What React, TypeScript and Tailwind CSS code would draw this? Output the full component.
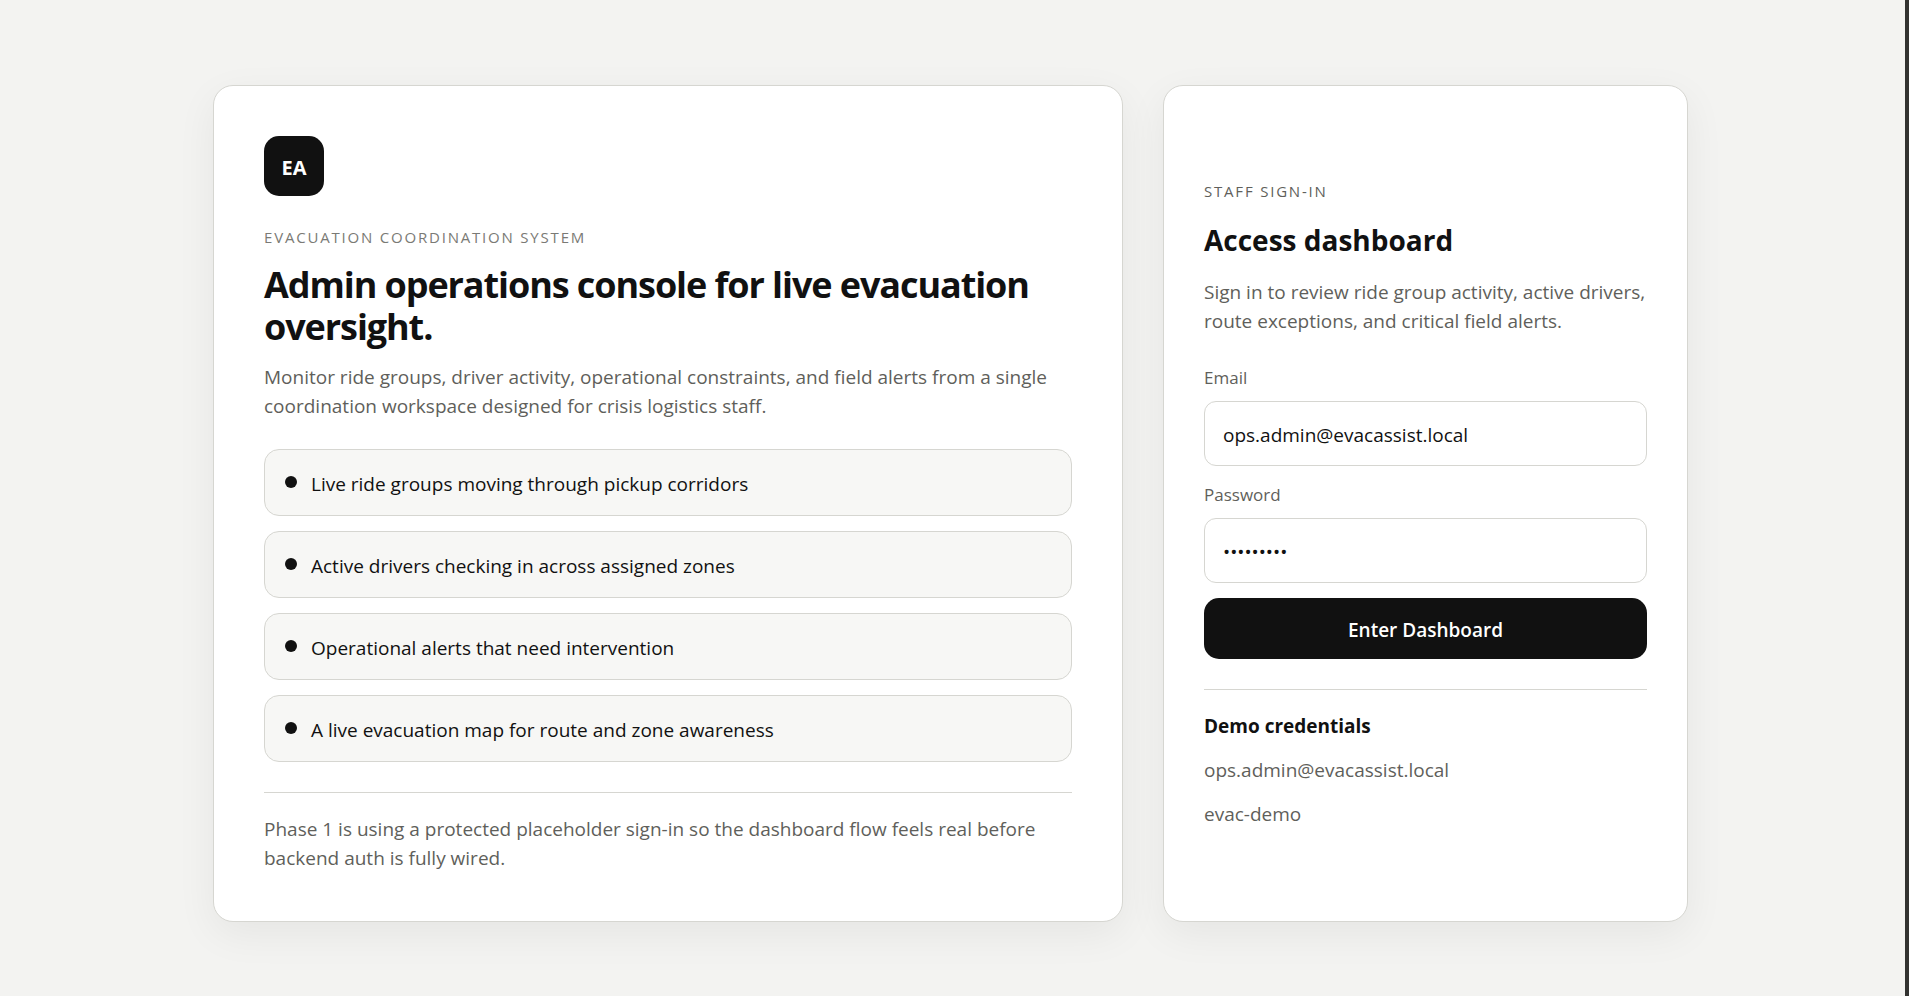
import { useState } from 'react';

const highlights = [
  'Live ride groups moving through pickup corridors',
  'Active drivers checking in across assigned zones',
  'Operational alerts that need intervention',
  'A live evacuation map for route and zone awareness',
];

const cardClass =
  'bg-white border border-[#d6d6d1] rounded-[20px] shadow-[0_12px_40px_rgba(17,17,17,0.06)]';
const inputClass =
  'w-full h-[65px] px-[18px] pt-0.5 rounded-xl border border-[#d6d6d1] bg-white text-[#111111] outline-none focus:border-[#111111]';

const IntroPanel = () => {
  return (
    <section className={`${cardClass} p-[50px]`}>
      <div className="size-[60px] pt-1 rounded-[15px] bg-[#111111] text-white text-xl font-bold flex items-center justify-center">
        EA
      </div>
      <p className="mt-[30px] text-[15px] leading-[22px] tracking-[0.12em] uppercase text-[#7a7a75]">
        Evacuation coordination system
      </p>
      <h1 className="mt-4 text-[36px] leading-[42px] font-bold tracking-[-0.03em]">
        Admin operations console for live evacuation oversight.
      </h1>
      <p className="mt-[15px] text-[#5f5f5b]">
        Monitor ride groups, driver activity, operational constraints, and field alerts from a single
        coordination workspace designed for crisis logistics staff.
      </p>
      <ul className="mt-7 grid gap-[15px]">
        {highlights.map((item) => (
          <li
            key={item}
            className="flex items-start gap-[14px] px-5 pt-5 pb-4 rounded-[15px] border border-[#d6d6d1] bg-[#f7f7f5]"
          >
            <span className="mt-1.5 size-3 shrink-0 rounded-full bg-[#111111]" />
            <span>{item}</span>
          </li>
        ))}
      </ul>
      <p className="mt-[30px] pt-[22px] -mb-0.5 border-t border-[#d6d6d1] text-[#5f5f5b]">
        Phase 1 is using a protected placeholder sign-in so the dashboard flow feels real before
        backend auth is fully wired.
      </p>
    </section>
  );
};

const SignInPanel = () => {
  const [email, setEmail] = useState('ops.admin@evacassist.local');
  const [password, setPassword] = useState('evac-demo');

  return (
    <section className={`${cardClass} p-10 flex flex-col justify-center`}>
      <p className="text-[15px] leading-[22px] tracking-[0.12em] uppercase text-[#5f5f5b]">
        Staff sign-in
      </p>
      <h2 className="mt-4 text-[28px] leading-[44px] font-bold">Access dashboard</h2>
      <p className="mt-4 text-[#5f5f5b]">
        Sign in to review ride group activity, active drivers, route exceptions, and critical field
        alerts.
      </p>
      <form className="mt-7 grid gap-[15px]" onSubmit={(e) => e.preventDefault()}>
        <div className="grid gap-[10px]">
          <label htmlFor="email" className="text-[17px] leading-[27px] text-[#5f5f5b]">
            Email
          </label>
          <input
            id="email"
            type="email"
            className={inputClass}
            value={email}
            onChange={(e) => setEmail(e.target.value)}
          />
        </div>
        <div className="grid gap-[10px]">
          <label htmlFor="password" className="text-[17px] leading-[27px] text-[#5f5f5b]">
            Password
          </label>
          <input
            id="password"
            type="password"
            className={inputClass}
            value={password}
            onChange={(e) => setPassword(e.target.value)}
          />
        </div>
        <button
          type="submit"
          className="h-[61px] pt-1 rounded-[15px] bg-[#111111] text-white font-semibold cursor-pointer"
        >
          Enter Dashboard
        </button>
      </form>
      <div className="mt-[30px] pt-[22px] -mb-0.5 border-t border-[#d6d6d1] grid gap-[15px] text-[#5f5f5b]">
        <strong className="font-bold text-[#111111]">Demo credentials</strong>
        <span>ops.admin@evacassist.local</span>
        <span>evac-demo</span>
      </div>
    </section>
  );
};

export default function App() {
  return (
    <div className="min-h-screen flex bg-[#f3f3f1] text-[#111111] text-[19px] leading-[29px] font-['Open_Sans','Noto_Sans',sans-serif]">
      <main className="flex-1 pt-[85px] pb-[74px] pl-5 pr-6">
        <div className="mx-auto max-w-[1475px] grid gap-10 lg:grid-cols-[minmax(0,910fr)_minmax(0,525fr)]">
          <IntroPanel />
          <SignInPanel />
        </div>
      </main>
      <div className="w-1 bg-[#333331]" />
    </div>
  );
}
